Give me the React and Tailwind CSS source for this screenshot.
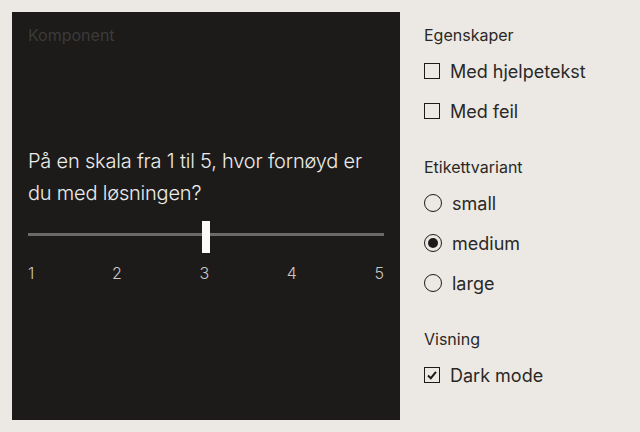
import React from 'react';

const font = { fontFamily: 'Inter, "Liberation Sans", sans-serif' };

const CheckBox = ({ checked, label }) => (
  <label className="flex items-center gap-[10px] h-10 text-[18px] text-[#2a2826]">
    <span className="w-4 h-4 border-[1.5px] border-[#1c1b1a] flex items-center justify-center">
      {checked && (
        <svg width="12" height="12" viewBox="0 0 12 12">
          <path d="M2 6.5 L4.8 9.2 L10 2.8" fill="none" stroke="#1c1b1a" strokeWidth="2" />
        </svg>
      )}
    </span>
    {label}
  </label>
);

const Radio = ({ checked, label }) => (
  <label className="flex items-center gap-[10px] h-10 text-[18px] text-[#2a2826]">
    <span className="w-[18px] h-[18px] rounded-full border-[1.5px] border-[#1c1b1a] flex items-center justify-center">
      {checked && <span className="w-[10px] h-[10px] rounded-full bg-[#1c1b1a]"></span>}
    </span>
    {label}
  </label>
);

export default function App() {
  return (
    <div className="w-[640px] h-[432px] bg-[#ece9e4] flex p-3 gap-6" style={font}>
      {/* Preview panel */}
      <div className="w-[388px] h-[408px] bg-[#1c1b1a] px-4 pt-[11px] flex flex-col">
        <div className="text-[16px] text-[#3b3a38] leading-6">Komponent</div>
        <div className="mt-[98px] text-[20px] leading-8 text-[#ecebe9] font-light tracking-[-0.01em]">
          På en skala fra 1 til 5, hvor fornøyd er du med løsningen?
        </div>
        <div className="relative h-8 mt-[12px]">
          <div className="mt-[12px] w-full h-[3px] bg-[#6b6a68]"></div>
          <div className="absolute left-[174px] top-0 w-2 h-8 bg-[#fafafa]"></div>
        </div>
        <div className="flex justify-between mt-[8px] text-[16px] text-[#c9c8c6] leading-6 font-light">
          <span>1</span>
          <span>2</span>
          <span>3</span>
          <span>4</span>
          <span>5</span>
        </div>
      </div>

      {/* Controls */}
      <div className="flex flex-col pt-[11px]">
        <div className="text-[16px] leading-6 text-[#2a2826]">Egenskaper</div>
        <div className="mt-[4px]">
          <CheckBox label="Med hjelpetekst" />
          <CheckBox label="Med feil" />
        </div>
        <div className="mt-[24px] text-[16px] leading-6 text-[#2a2826]">Etikettvariant</div>
        <div className="mt-[4px]">
          <Radio label="small" />
          <Radio label="medium" checked />
          <Radio label="large" />
        </div>
        <div className="mt-[24px] text-[16px] leading-6 text-[#2a2826]">Visning</div>
        <div className="mt-[4px]">
          <CheckBox label="Dark mode" checked />
        </div>
      </div>
    </div>
  );
}
